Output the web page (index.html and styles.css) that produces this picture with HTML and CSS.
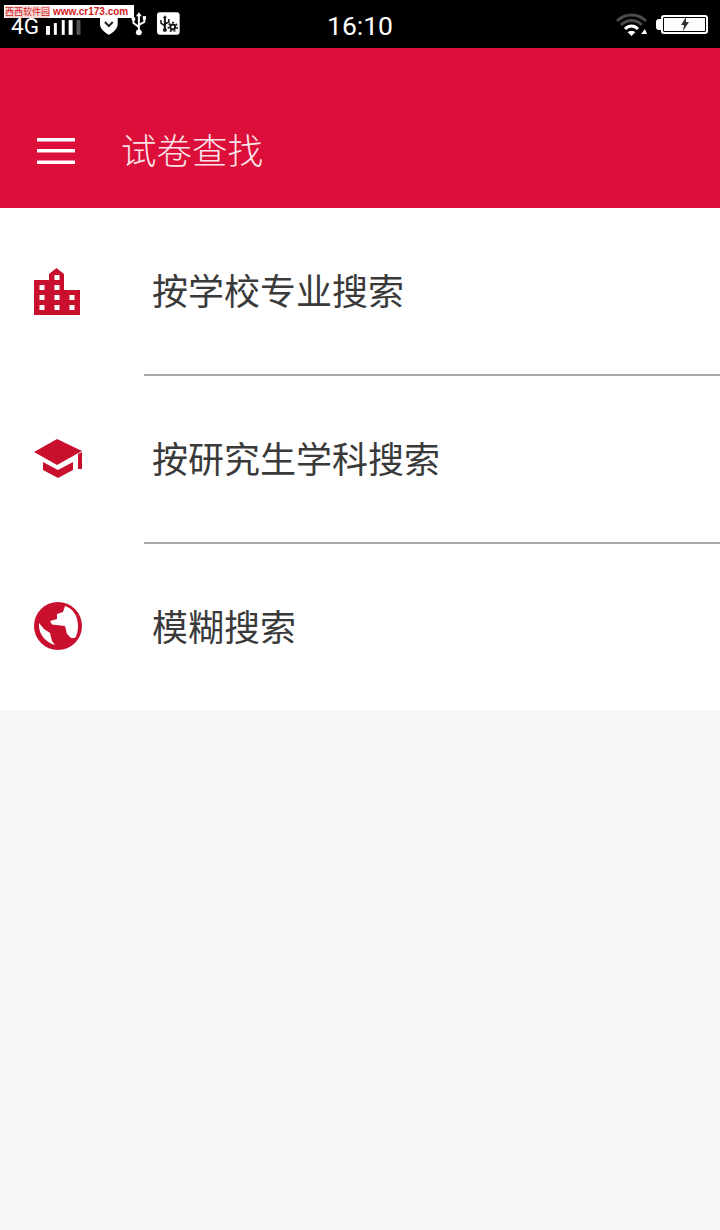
FILE: index.html
```html
<!DOCTYPE html>
<html lang="zh-CN">

<head>
    <meta charset="UTF-8">
    <meta name="viewport" content="width=device-width, initial-scale=1.0">
    <title>试卷查找</title>
    <link rel="stylesheet" href="styles.css">
</head>

<body>
    <div class="status-bar">
        <div class="watermark"><span class="watermark-name">西西软件园</span><span class="watermark-url">www.cr173.com</span></div>
        <div class="status-left">
            <span class="network">4G</span>
            <svg class="signal" width="36" height="18" viewBox="0 0 36 18">
                <rect x="0" y="9" width="4" height="9" fill="#fff"/>
                <rect x="8" y="6" width="3" height="12" fill="#fff"/>
                <rect x="16" y="3" width="3" height="15" fill="#fff"/>
                <rect x="23" y="3" width="4" height="15" fill="#fff"/>
                <rect x="31" y="3" width="4" height="15" fill="#555"/>
            </svg>
            <svg class="shield" width="20" height="20" viewBox="0 0 20 20">
                <path d="M1 0H19V9C19 14 14 18 10 20C6 18 1 14 1 9Z" fill="#fff"/>
                <path d="M6 7L10 11L14 7" fill="none" stroke="#222" stroke-width="2"/>
            </svg>
            <svg class="usb" width="16" height="24" viewBox="0 0 16 24">
                <path d="M8 0L11 4H9V18H7V4H5Z" fill="#fff"/>
                <circle cx="8" cy="20.500" r="3" fill="#fff"/>
                <path d="M8 15L2.500 11V8M8 13L13.500 10V7" fill="none" stroke="#fff" stroke-width="2"/>
                <circle cx="2.500" cy="7" r="2" fill="#fff"/>
                <rect x="12" y="4" width="3.500" height="3.500" fill="#fff"/>
            </svg>
            <svg class="usb-debug" width="23" height="23" viewBox="0 0 23 23">
                <rect width="23" height="23" rx="3" fill="#fff"/>
                <path d="M8 3L10 6H9V17H7V6H6Z" fill="#111"/>
                <circle cx="8" cy="18" r="2" fill="#111"/>
                <path d="M8 14L4 11V8M8 12L12 10V7" fill="none" stroke="#111" stroke-width="1.500"/>
                <circle cx="16" cy="15" r="2.500" fill="none" stroke="#111" stroke-width="2"/>
                <circle cx="16" cy="15" r="4.500" fill="none" stroke="#111" stroke-width="1.500" stroke-dasharray="2 2"/>
            </svg>
        </div>
        <span class="clock">16:10</span>
        <div class="status-right">
            <svg class="wifi" width="32" height="24" viewBox="0 0 32 24">
                <path d="M1 9C9 1 22 1 30 9" fill="none" stroke="#4a4a4a" stroke-width="3"/>
                <path d="M5 13C11 7 20 7 26 13" fill="none" stroke="#4a4a4a" stroke-width="3"/>
                <path d="M9 17C13 13 18 13 22 17" fill="none" stroke="#fff" stroke-width="3"/>
                <path d="M15.500 24L11.500 20C13.500 18.500 17.500 18.500 19.500 20Z" fill="#fff"/>
                <path d="M25 22L29 17L31 22Z" fill="#fff"/>
            </svg>
            <div class="battery">
                <svg class="bolt" width="10" height="14" viewBox="0 0 10 14">
                    <path d="M6 0L1 8H4L3 14L9 5H6Z" fill="#333"/>
                </svg>
            </div>
        </div>
    </div>

    <div class="app-bar">
        <svg class="menu-icon" width="38" height="26" viewBox="0 0 38 26">
            <rect y="0" width="38" height="3.500" fill="#fff"/>
            <rect y="11" width="38" height="3.500" fill="#fff"/>
            <rect y="22.500" width="38" height="3.500" fill="#fff"/>
        </svg>
        <h1 class="app-title">试卷查找</h1>
    </div>

    <div class="menu-list">
        <div class="menu-row">
            <div class="menu-icon-cell">
                <svg width="48" height="48" viewBox="1 0 48 48">
                    <path d="M1 13H16V7L23.500 1L31 7V23H47V48H1Z" fill="#c8102e"/>
                    <g fill="#fff">
                        <rect x="21.500" y="8" width="5" height="5"/>
                        <rect x="6.500" y="18" width="5" height="5"/>
                        <rect x="21.500" y="18" width="5" height="5"/>
                        <rect x="6.500" y="28" width="5" height="5"/>
                        <rect x="21.500" y="28" width="5" height="5"/>
                        <rect x="36.500" y="28" width="5" height="5"/>
                        <rect x="6.500" y="38" width="5" height="5"/>
                        <rect x="21.500" y="38" width="5" height="5"/>
                        <rect x="36.500" y="38" width="5" height="5"/>
                    </g>
                </svg>
            </div>
            <div class="menu-text menu-text-line">按学校专业搜索</div>
        </div>
        <div class="menu-row">
            <div class="menu-icon-cell">
                <svg width="48" height="48" viewBox="0 -2 48 48">
                    <path d="M0 15L23 2L48 14L23 28Z" fill="#c8102e"/>
                    <path d="M44 17L48 15V32H44Z" fill="#c8102e"/>
                    <path d="M9 25L24 33L39 25V33L24 41L9 33Z" fill="#c8102e"/>
                </svg>
            </div>
            <div class="menu-text menu-text-line">按研究生学科搜索</div>
        </div>
        <div class="menu-row menu-row-last">
            <div class="menu-icon-cell">
                <svg width="48" height="48" viewBox="0 0 48 48">
                    <circle cx="24" cy="24" r="24" fill="#c8102e"/>
                    <path d="M31 4C38 6 44 13 44 24C44 29 43 33 41 36L37 36L33 32L31 24L18 22.500L16 19L23 17L23 12L29 10Z" fill="#fff"/>
                    <path d="M5 21L10 27L16 31L18 39L21 43C13 41 5 33 5 24Z" fill="#fff"/>
                </svg>
            </div>
            <div class="menu-text">模糊搜索</div>
        </div>
    </div>
</body>

</html>
```

FILE: styles.css
```css
body {
    margin: 0;
    height: 1230px;
    overflow: hidden;
    font-family: "Noto Sans CJK SC", "Noto Sans", sans-serif;
    background-color: #f5f7f7;
}

.status-bar {
    position: relative;
    height: 48px;
    background-color: #000;
    color: #fff;
    display: flex;
    align-items: center;
    justify-content: space-between;
    padding: 0 12px 0 11px;
    box-sizing: border-box;
}

.watermark {
    position: absolute;
    left: 4px;
    top: 5px;
    width: 130px;
    height: 13px;
    background-color: #fff;
    display: flex;
    align-items: center;
    z-index: 1;
    white-space: nowrap;
    overflow: hidden;
}

.watermark-name {
    font-size: 9px;
    line-height: 12px;
    color: #d01818;
    background-color: #f6d8d8;
    margin-left: 1px;
}

.watermark-url {
    font-family: "Liberation Sans", sans-serif;
    font-size: 10px;
    line-height: 12px;
    font-weight: bold;
    color: #d01818;
    margin-left: 3px;
}

.status-left {
    width: 169px;
    height: 48px;
    display: flex;
    align-items: flex-end;
}

.network {
    font-family: Roboto, sans-serif;
    font-size: 22.500px;
    line-height: 16px;
    margin-bottom: 14px;
    width: 36px;
}

.signal {
    margin-bottom: 13px;
}

.shield {
    margin-left: 17px;
    margin-bottom: 13px;
}

.usb {
    margin-left: 12px;
    margin-bottom: 12px;
}

.usb-debug {
    margin-left: 11px;
    margin-bottom: 13px;
}

.clock {
    font-family: Roboto, sans-serif;
    font-size: 26.500px;
    position: absolute;
    left: 327px;
    top: 9px;
    line-height: 33px;
}

.status-right {
    display: flex;
    align-items: center;
}

.wifi {
    margin-right: 13px;
}

.battery {
    position: relative;
    width: 43px;
    height: 15px;
    border: 2px solid #fff;
    border-radius: 3px;
    background-color: #fff;
    box-shadow: inset 0 0 0 1px #000;
    display: flex;
    align-items: center;
    justify-content: center;
}

.battery::before {
    content: "";
    position: absolute;
    left: -7px;
    top: 2px;
    width: 5px;
    height: 11px;
    background-color: #fff;
    border-radius: 3px 0 0 3px;
}

.app-bar {
    height: 160px;
    background-color: #dc0f3a;
    display: flex;
    align-items: flex-end;
    box-sizing: border-box;
    padding: 0 0 27px 37px;
}

.menu-icon {
    margin-bottom: 17px;
}

.app-title {
    margin: 0 0 5px 46px;
    font-size: 35.500px;
    font-weight: 300;
    line-height: 54px;
    color: #fbe4e8;
}

.menu-list {
    background-color: #fff;
    height: 502px;
}

.menu-row {
    height: 168px;
    display: flex;
}

.menu-row-last {
    height: 166px;
}

.menu-icon-cell {
    width: 144px;
    box-sizing: border-box;
    padding: 59px 0 0 34px;
}

.menu-row-last .menu-icon-cell {
    padding-top: 58px;
}

.menu-text {
    flex: 1;
    box-sizing: border-box;
    padding: 54px 0 0 8px;
    font-size: 36px;
    line-height: 54px;
    color: #3a3a3a;
}

.menu-text-line {
    border-bottom: 2px solid #aaa;
}
```
